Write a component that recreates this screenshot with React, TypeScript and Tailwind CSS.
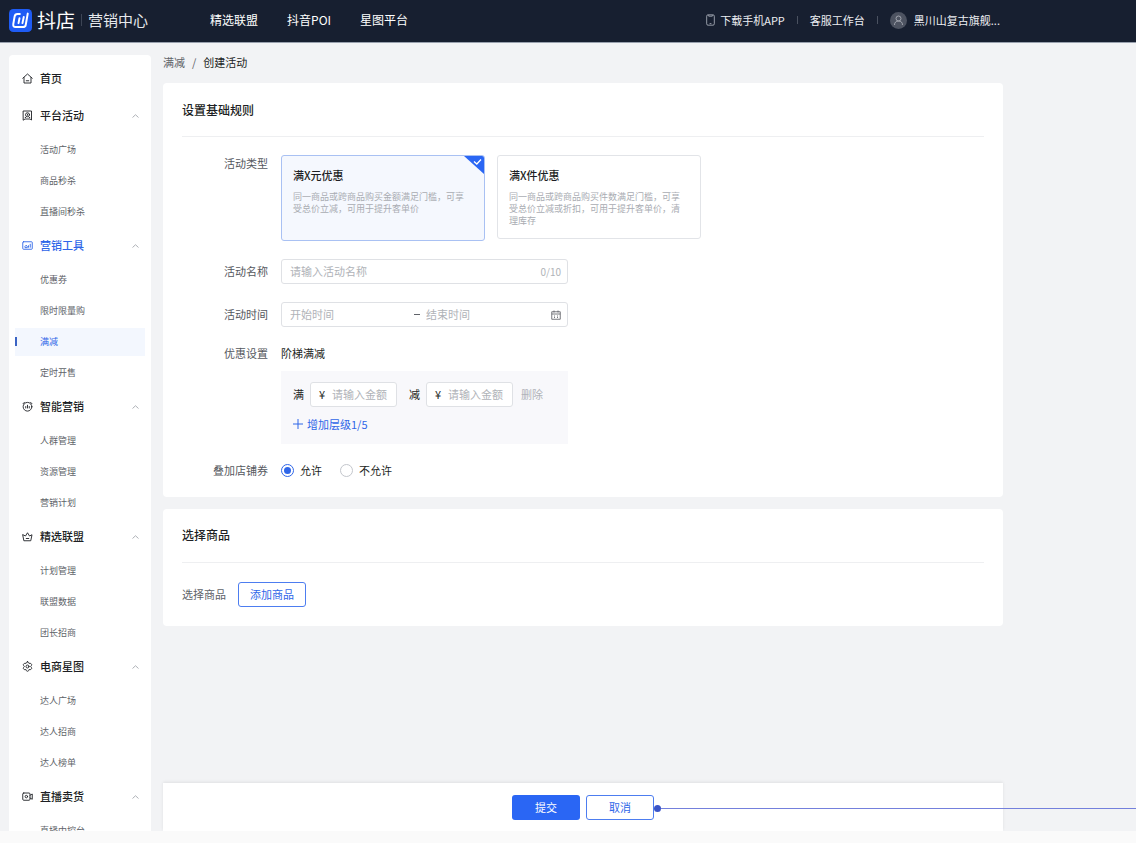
import { useState, type ReactNode } from "react";

type MenuGroupType = {
  title: string;
  icon: ReactNode;
  items: string[];
  active?: boolean;
};

type IconProps = { children: ReactNode };

const MenuIcon = ({ children }: IconProps) => (
  <svg
    viewBox="0 0 22 22"
    className="size-[11px] shrink-0"
    fill="none"
    stroke="currentColor"
    strokeWidth="1.8"
    strokeLinecap="round"
    strokeLinejoin="round"
    aria-hidden="true"
  >
    {children}
  </svg>
);

const HomeIcon = () => (
  <MenuIcon>
    <path d="M1.5 10.5 11 2l9.5 8.5M4 9v11h14V9M8.5 15.5h5" />
  </MenuIcon>
);

const BadgeIcon = () => (
  <MenuIcon>
    <path d="M3 2h16v18l-3-2H6l-3 2z" />
    <circle cx="11" cy="9.5" r="4" />
    <path d="M11 8.5v2M6.5 15h1M14.5 15h1" />
  </MenuIcon>
);

const ToolIcon = () => (
  <MenuIcon>
    <rect x="1.5" y="3.5" width="19" height="15" rx="1.5" />
    <path d="M6 14.5v-2l2-2 2.5 2v2zM13 14.5v-3M16.5 14.5v-6" />
  </MenuIcon>
);

const SmartIcon = () => (
  <MenuIcon>
    <circle cx="11" cy="11.5" r="8.7" />
    <path d="M2 5.5 5 2.5M20 5.5 17 2.5M7.5 11v3M11 8.5v5.5M14.5 11v3" />
  </MenuIcon>
);

const CrownIcon = () => (
  <MenuIcon>
    <path d="M4.5 19.5h13l2.5-12-5 2.5-4-6.5L7 10 2 7.5zM8.5 15h5" />
  </MenuIcon>
);

const StarMapIcon = () => (
  <MenuIcon>
    <circle cx="11" cy="11" r="3" />
    <path d="M11 1.5c2 0 2.5 1.5 3 3.5 2-.5 4-.5 5 1.3s-.3 3-1.7 4.7c1.4 1.7 2.7 3 1.7 4.700s-3 1.800-5 1.300c-.5 2-1 3.500-3 3.500s-2.500-1.500-3-3.500c-2 .5-4 .5-5-1.300s.3-3 1.700-4.700C3.300 9.300 2 8 3 6.300S6 4.500 8 5c.5-2 1-3.500 3-3.500z" />
  </MenuIcon>
);

const LiveIcon = () => (
  <MenuIcon>
    <rect x="1.5" y="4" width="14.5" height="14.5" rx="2" />
    <circle cx="8.7" cy="11.2" r="2.5" />
    <path d="M16 8.5 20.5 6v10.500L16 14" />
  </MenuIcon>
);

const menuGroups: MenuGroupType[] = [
  {
    title: "平台活动",
    icon: <BadgeIcon />,
    items: ["活动广场", "商品秒杀", "直播间秒杀"],
  },
  {
    title: "营销工具",
    icon: <ToolIcon />,
    items: ["优惠券", "限时限量购", "满减", "定时开售"],
    active: true,
  },
  {
    title: "智能营销",
    icon: <SmartIcon />,
    items: ["人群管理", "资源管理", "营销计划"],
  },
  {
    title: "精选联盟",
    icon: <CrownIcon />,
    items: ["计划管理", "联盟数据", "团长招商"],
  },
  {
    title: "电商星图",
    icon: <StarMapIcon />,
    items: ["达人广场", "达人招商", "达人榜单"],
  },
  {
    title: "直播卖货",
    icon: <LiveIcon />,
    items: ["直播中控台"],
  },
];

const activityTypes = [
  {
    title: "满X元优惠",
    text: "同一商品或跨商品购买金额满足门槛，可享受总价立减，可用于提升客单价",
  },
  {
    title: "满X件优惠",
    text: "同一商品或跨商品购买件数满足门槛，可享受总价立减或折扣，可用于提升客单价，清理库存",
  },
];

const Header = () => (
  <header className="flex h-[43px] shrink-0 items-center justify-between border-b border-[#99a1ae] bg-[#171f30] pb-[2px] pl-[9px] pr-[136px] text-white">
    <div className="flex items-center whitespace-nowrap">
      <svg viewBox="0 0 70 70" className="size-[23px]" aria-hidden="true">
        <rect width="70" height="70" rx="13" fill="#1f5cf5" />
        <g
          fill="none"
          stroke="#fff"
          strokeWidth="6"
          strokeLinecap="round"
          strokeLinejoin="round"
        >
          <path d="M33 15h-7q-8 0-9 8l-4 23q-1 9 7 9h22q8 0 9-7l6-34" />
          <path d="M32 28l-3 15M45 24l-4 19" />
        </g>
      </svg>
      <span className="ml-[5px] text-[19px] leading-6">抖店</span>
      <span className="mx-[6px] h-3 w-px bg-[#3d4555]" />
      <span className="text-[15px] leading-6 text-[#e6e8ec]">营销中心</span>
      <nav className="ml-[62px] flex gap-[29px] text-xs">
        <a href="#">精选联盟</a>
        <a href="#">抖音POI</a>
        <a href="#">星图平台</a>
      </nav>
    </div>
    <div className="flex items-center whitespace-nowrap text-[11px] text-[#eceef2]">
      <a href="#" className="flex items-center gap-[5px]">
        <svg
          viewBox="0 0 20 26"
          className="h-3 w-[9px]"
          fill="none"
          stroke="#a3a8b3"
          strokeWidth="2"
          aria-hidden="true"
        >
          <rect x="1.5" y="1.5" width="17" height="23" rx="3" />
          <path d="M6 2v2.500h8V2M8 21h4" />
        </svg>
        下载手机APP
      </a>
      <span className="mx-3 h-2 w-px bg-[#4a5160]" />
      <a href="#">客服工作台</a>
      <span className="mx-3 h-2 w-px bg-[#4a5160]" />
      <a href="#" className="flex items-center gap-[7px]">
        <svg viewBox="0 0 34 34" className="size-[17px]" aria-hidden="true">
          <circle cx="17" cy="17" r="17" fill="#4d5361" />
          <g fill="none" stroke="#a9adb6" strokeWidth="1.8">
            <circle cx="17" cy="13" r="5" />
            <path d="M9 26c0-5 3-8 8-8s8 3 8 8" />
          </g>
        </svg>
        黑川山复古旗舰...
      </a>
    </div>
  </header>
);

const Sidebar = () => (
  <aside className="ml-[9px] mt-3 w-[142px] shrink-0 overflow-hidden rounded-t bg-white px-[6px] pt-[5px]">
    <a
      href="#"
      className="flex h-[37px] items-center gap-[7px] pl-[7px] text-[11px] font-medium text-[#1d1f24]"
    >
      <HomeIcon />
      首页
    </a>
    {menuGroups.map((group) => (
      <div key={group.title}>
        <button
          type="button"
          className={`flex h-[37px] w-full items-center gap-[7px] pl-[7px] pr-[6px] text-[11px] font-medium ${
            group.active ? "text-[#2f66e8]" : "text-[#1d1f24]"
          }`}
        >
          {group.icon}
          {group.title}
          <svg
            viewBox="0 0 14 8"
            className="ml-auto h-1 w-[7px]"
            fill="none"
            stroke="#a5a8ae"
            strokeWidth="1.8"
            aria-hidden="true"
          >
            <path d="M1 7l6-5.500L13 7" />
          </svg>
        </button>
        <ul>
          {group.items.map((item) => (
            <li key={item} className="flex h-[31px] items-center">
              <a
                href="#"
                className={`flex h-7 flex-1 items-center text-[9px] ${
                  item === "满减"
                    ? "bg-[#f3f7fe] text-[#2f66e8]"
                    : "text-[#606369]"
                }`}
              >
                <span
                  className={`h-[9px] w-[2px] ${
                    item === "满减" ? "bg-[#3a63c4]" : ""
                  }`}
                />
                <span className="ml-[23px]">{item}</span>
              </a>
            </li>
          ))}
        </ul>
      </div>
    ))}
  </aside>
);

type CardProps = { title: string; children: ReactNode };

const Card = ({ title, children }: CardProps) => (
  <section className="rounded bg-white px-[19px]">
    <h2 className="flex h-[54px] items-center border-b border-[#eeeff1] text-xs font-medium text-[#1d1f24]">
      {title}
    </h2>
    {children}
  </section>
);

const rowLabel = "w-[86px] shrink-0 text-right text-[11px] text-[#55585e]";
const fieldBox =
  "flex h-[25px] items-center rounded-[3px] border border-[#dfe1e5] bg-white text-[11px]";
const fieldInput =
  "min-w-0 bg-transparent text-[#1d1f24] outline-none placeholder:text-[#b0b3b8]";

type AmountProps = { id: string; label: string };

const AmountField = ({ id, label }: AmountProps) => (
  <div className="flex items-center gap-[6px]">
    <label htmlFor={id} className="text-[11px]">
      {label}
    </label>
    <div className={`${fieldBox} w-[87px] gap-[7px] pl-2`}>
      <span>¥</span>
      <input
        id={id}
        type="text"
        placeholder="请输入金额"
        className={`${fieldInput} flex-1`}
      />
    </div>
  </div>
);

const BasicRules = () => {
  const [selected, setSelected] = useState(0);
  const [name, setName] = useState("");

  return (
    <Card title="设置基础规则">
      <div className="flex gap-[13px] pt-[18px]">
        <div className={`${rowLabel} leading-4`}>活动类型</div>
        <div className="flex items-start gap-3">
          {activityTypes.map((type, index) => (
            <button
              key={type.title}
              type="button"
              aria-pressed={selected === index}
              onClick={() => setSelected(index)}
              className={`relative flex w-[204px] flex-col overflow-hidden rounded-[3px] border pl-[11px] pr-3 pt-[11px] text-left ${
                selected === index
                  ? "h-[86px] border-[#a9c1f3] bg-[#f5f8fe]"
                  : "h-[84px] border-[#e2e4e8] bg-white"
              }`}
            >
              <span className="text-[11px] font-medium leading-4 text-[#1d1f24]">
                {type.title}
              </span>
              <span className="mt-2 text-[9px] leading-3 text-[#a9acb2]">
                {type.text}
              </span>
              {selected === index && (
                <svg
                  viewBox="0 0 20 18"
                  className="absolute right-0 top-0 h-[18px] w-5"
                  aria-hidden="true"
                >
                  <path d="M0 0h20v18z" fill="#2a66f4" />
                  <path
                    d="M10 5.500l2.800 2.500L17 3.500"
                    fill="none"
                    stroke="#fff"
                    strokeWidth="1.3"
                  />
                </svg>
              )}
            </button>
          ))}
        </div>
      </div>

      <div className="mt-[18px] flex items-center gap-[13px]">
        <label htmlFor="activity-name" className={rowLabel}>
          活动名称
        </label>
        <div className={`${fieldBox} w-[287px] px-2`}>
          <input
            id="activity-name"
            type="text"
            maxLength={10}
            value={name}
            onChange={(e) => setName(e.target.value)}
            placeholder="请输入活动名称"
            className={`${fieldInput} flex-1`}
          />
          <span className="-mr-[2px] text-[10px] text-[#b0b3b8]">
            {name.length}/10
          </span>
        </div>
      </div>

      <div className="mt-[18px] flex items-center gap-[13px]">
        <label htmlFor="start-time" className={rowLabel}>
          活动时间
        </label>
        <div className={`${fieldBox} w-[287px] px-2`}>
          <input
            id="start-time"
            type="text"
            placeholder="开始时间"
            className={`${fieldInput} w-[124px]`}
          />
          <span className="h-px w-[6px] bg-[#606369]" />
          <input
            type="text"
            aria-label="结束时间"
            placeholder="结束时间"
            className={`${fieldInput} ml-[6px] flex-1`}
          />
          <svg
            viewBox="0 0 20 20"
            className="-mr-[2px] size-[10px]"
            fill="none"
            stroke="#55585e"
            strokeWidth="1.6"
            aria-hidden="true"
          >
            <path d="M1.5 3.5h17v15h-17zM1.5 8h17M6 1v4M14 1v4M6 12h2M12 12h2M6 15h2M12 15h2" />
          </svg>
        </div>
      </div>

      <div className="mt-[18px] flex gap-[13px]">
        <div className={`${rowLabel} leading-4`}>优惠设置</div>
        <div className="text-[11px] text-[#1d1f24]">
          <div className="leading-4">阶梯满减</div>
          <div className="mt-[10px] w-[287px] bg-[#f8f8fb] px-3 pb-3 pt-[11px]">
            <div className="flex items-center">
              <AmountField id="threshold" label="满" />
              <div className="ml-3">
                <AmountField id="discount" label="减" />
              </div>
              <button type="button" className="ml-2 text-[#b0b3b8]">
                删除
              </button>
            </div>
            <button
              type="button"
              className="mt-[9px] flex h-4 items-center gap-1 text-[#2f66e8]"
            >
              <svg
                viewBox="0 0 10 10"
                className="size-[10px]"
                stroke="currentColor"
                strokeWidth="1"
                aria-hidden="true"
              >
                <path d="M5 0v10M0 5h10" />
              </svg>
              增加层级1/5
            </button>
          </div>
        </div>
      </div>

      <fieldset className="mt-[18px] flex items-center gap-[13px] pb-[18px]">
        <div className={rowLabel}>叠加店铺券</div>
        <div className="flex gap-[18px] text-[11px] text-[#1d1f24]">
          {["允许", "不允许"].map((option, index) => (
            <label key={option} className="flex items-center gap-[6px]">
              <input
                type="radio"
                name="stack-coupon"
                defaultChecked={index === 0}
                className="grid size-[13px] appearance-none place-items-center rounded-full border border-[#c3c6cc] bg-white before:size-[7px] before:rounded-full checked:border-[#2f66e8] checked:before:bg-[#2f66e8]"
              />
              {option}
            </label>
          ))}
        </div>
      </fieldset>
    </Card>
  );
};

const outlineButton =
  "block h-[25px] w-[68px] rounded-[3px] border border-[#4d7df0] bg-white text-[11px] text-[#2f66e8]";

const FooterBar = () => (
  <footer className="mt-auto flex h-12 shrink-0 items-center justify-center gap-[6px] bg-white shadow-[0_-1px_3px_rgba(0,0,0,0.08)]">
    <button
      type="button"
      className="h-[25px] w-[68px] rounded-[3px] bg-[#2a66f4] text-[11px] text-white"
    >
      提交
    </button>
    <div className="relative">
      <button type="button" className={outlineButton}>
        取消
      </button>
      <span className="absolute left-full top-[10px] flex w-screen items-center">
        <span className="size-[7px] rounded-full bg-[#3a55c8]" />
        <span className="h-px flex-1 bg-[#7480dc]" />
      </span>
    </div>
  </footer>
);

const App = () => (
  <div className="flex h-screen flex-col overflow-hidden bg-[#fafafa] pb-3 font-['Noto_Sans_CJK_SC',sans-serif]">
    <Header />
    <div className="flex min-h-0 flex-1 gap-3 overflow-hidden bg-[#f2f3f5]">
      <Sidebar />
      <main className="mr-[133px] flex min-w-0 flex-1 flex-col">
        <nav className="flex h-10 shrink-0 items-center gap-[7px] pb-[2px] text-[11px] text-[#606369]">
          <a href="#">满减</a>
          <span>/</span>
          <span className="text-[#1d1f24]">创建活动</span>
        </nav>
        <div className="flex flex-col gap-3">
          <BasicRules />
          <Card title="选择商品">
            <div className="flex items-center gap-3 py-[19px]">
              <span className="text-[11px] text-[#606369]">选择商品</span>
              <button type="button" className={outlineButton}>
                添加商品
              </button>
            </div>
          </Card>
        </div>
        <FooterBar />
      </main>
    </div>
  </div>
);

export default App;
